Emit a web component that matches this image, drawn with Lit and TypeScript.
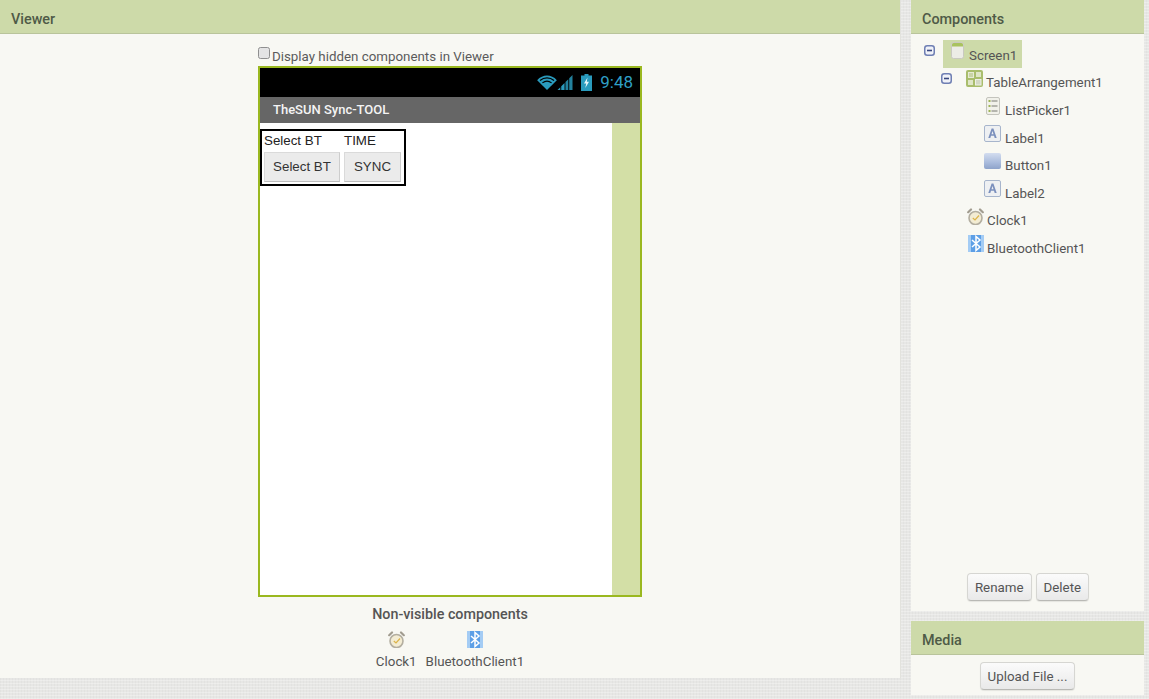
import { LitElement, html, css, svg } from "lit";
import { customElement } from "lit/decorators.js";

const screenIcon = svg`<svg width="13" height="17" viewBox="0 0 13 17"><rect x=".5" y=".5" width="12" height="16" rx="2" fill="#ecece6" stroke="#c9c9c0"/><path d="M1 4.500V2.500A1.500 1.500 0 0 1 2.500 1h8A1.500 1.500 0 0 1 12 2.500v2z" fill="#a9c25f"/></svg>`;
const tableIcon = svg`<svg width="17" height="17" viewBox="0 0 17 17"><rect width="17" height="17" rx="2" fill="#a9bd6c"/><rect x="2.500" y="2.500" width="5" height="5" fill="#c9d4a6" stroke="#e6ebd4"/><rect x="10" y="2" width="5" height="5" fill="#dfe6c6"/><rect x="2" y="10" width="5" height="5" fill="#dfe6c6"/><rect x="9.500" y="9.500" width="5.500" height="5.500" fill="#d3d8c4" stroke="#eef0e6"/></svg>`;
const listIcon = svg`<svg width="14" height="18" viewBox="0 0 14 18"><rect x=".5" y=".5" width="13" height="17" rx="1.500" fill="#f1f1ea" stroke="#c4c4bd"/><g fill="#9eb456"><rect x="2.500" y="3" width="2" height="2"/><rect x="2.500" y="8" width="2" height="2"/><rect x="2.500" y="13" width="2" height="2"/></g><g fill="#b5b5ae"><rect x="5.500" y="3" width="6" height="2"/><rect x="5.500" y="8" width="6" height="2"/><rect x="5.500" y="13" width="6" height="2"/></g></svg>`;
const labelIcon = svg`<svg width="17" height="17" viewBox="0 0 17 17"><rect x=".5" y=".5" width="16" height="16" rx="1.500" fill="#eef0f2" stroke="#a7b5cc"/><path d="M4.300 13 7.600 3.500h1.800l3.300 9.500h-2l-.7-2.200H7l-.7 2.200zM7.500 9.200h2L8.500 5.900z" fill="#7b90bd"/></svg>`;
const buttonIcon = svg`<svg width="17" height="16" viewBox="0 0 17 16"><defs><linearGradient id="bt" x1="0" y1="0" x2="0" y2="1"><stop offset="0" stop-color="#d3ddef"/><stop offset=".6" stop-color="#a9bbdc"/><stop offset="1" stop-color="#8ea3ca"/></linearGradient></defs><rect width="17" height="16" rx="2" fill="url(#bt)"/></svg>`;
const clockIcon = svg`<svg width="17" height="17" viewBox="0 0 17 17"><circle cx="8.500" cy="10" r="6.500" fill="#f3ecd3" stroke="#b3aea0" stroke-width="1.600"/><path d="M1.200 4.200 4 1.500M15.800 4.200 13 1.500" stroke="#a19c8f" stroke-width="2.200" stroke-linecap="round"/><path d="M5.800 10 8 12l4-4.500" fill="none" stroke="#dcb449" stroke-width="1.200"/></svg>`;
const btIcon = svg`<svg width="16" height="17" viewBox="0 0 16 17"><rect width="16" height="17" rx="1.500" fill="#5d9fe6"/><rect width="3" height="17" fill="#a4ccf4"/><rect x="13" width="3" height="17" fill="#a4ccf4"/><path d="M4 5l8 7L8 15.500V1.500L12 5l-8 7" fill="none" stroke="#fff" stroke-width="1.500"/></svg>`;

const checkboxIcon = svg`<svg width="12" height="12" viewBox="0 0 12 12"><rect x=".5" y=".5" width="11" height="11" rx="2" fill="#e4e4e4" stroke="#8f8f8f"/></svg>`;
const wifi = svg`<svg width="20" height="15" viewBox="0 0 21 16"><path d="M10.500 16 0 5.500C6-1 15-1 21 5.500z" fill="#2a9bbd"/><path d="M3 5.800c4.500-3.600 10.500-3.600 15 0M5.600 8.400c3-2.300 6.800-2.300 9.800 0" fill="none" stroke="#000" stroke-width="1.300"/></svg>`;
const signal = svg`<svg width="16" height="15" viewBox="0 0 16 16"><path d="M0 16 3 13V16zM4 16V12L7.500 8.500V16z" fill="#2a9bbd"/><path d="M8.500 16V7.500L11.500 4.500V16zM12.500 16V3.500L16 0V16z" fill="#23819d"/></svg>`;
const battery = svg`<svg width="11" height="17" viewBox="0 0 11 17"><path d="M3.500 0h4v1.500h3.500V17H0V1.500h3.500z" fill="#2a9bbd"/><path d="M6.500 3.500 3 9.500h2.200L4.300 14 8 7.800H5.800z" fill="#e8f6fa"/></svg>`;
const toggle = svg`<svg class="toggle" width="11" height="11" viewBox="0 0 11 11"><rect x=".75" y=".75" width="9.500" height="9.500" rx="2.500" fill="#f0f2f8" stroke="#6f7fb3" stroke-width="1.500"/><rect x="3" y="4.700" width="5" height="1.600" fill="#39477f"/></svg>`;

@customElement("app-root")
export class AppRoot extends LitElement {
  static styles = css`
    :host {
      display: block;
      width: 1149px;
      height: 699px;
      overflow: hidden;
      font-family: Roboto, "Liberation Sans", sans-serif;
      color: #555;
      background-color: #e7e7e5;
      background-image:
        repeating-linear-gradient(0deg, rgba(255,255,255,.28) 0 1px, transparent 1px 3px),
        repeating-linear-gradient(90deg, rgba(0,0,0,.025) 0 1px, transparent 1px 3px);
    }
    .page { display: grid; grid-template-columns: 901px 233px; column-gap: 10px; align-items: start; }
    .right { display: flex; flex-direction: column; gap: 10px; }
    .panel { background: #f8f8f3; box-sizing: border-box; display: flex; flex-direction: column; }
    .head {
      height: 34px; box-sizing: border-box; flex: none;
      background: #cddaa9; border-bottom: 1px solid #b9c49b;
      padding: 5px 11px 0; display: flex; align-items: center;
      font-size: 14.400px; font-weight: 500; color: #4f5a47;
    }
    .viewer { height: 678px; border-right: 1px solid #e2e2dd; }
    .viewbody { flex: 1; display: flex; flex-direction: column; align-items: center; }
    .hidden {
      width: 384px; height: 32px; box-sizing: border-box; padding-top: 13px;
      display: flex; align-items: flex-start; font-size: 13.330px; color: #5b5b5b; gap: 2px;
    }
    .hidden svg { display: block; }
    .hidden span { margin-top: 2px; line-height: 15px; }
    .phone {
      width: 384px; height: 531px; box-sizing: border-box;
      border: 2px solid #9ab81f; display: flex; flex-direction: column; background: #fff;
    }
    .status {
      height: 29px; flex: none; background: #000; display: flex; align-items: center;
      justify-content: flex-end; padding-right: 7px; color: #2f9fc5; font-size: 17px; font-family: Roboto, sans-serif;
    }
    .status svg { display: block; }
    .time { margin-top: -2px; }
    .signal { margin-right: 8px; }
    .battery { margin-right: 8px; }
    .title {
      height: 26px; flex: none; box-sizing: border-box; padding: 0 0 2px 13px;
      background: #666; color: #f4f4f4; font-size: 13px; font-weight: 500;
      display: flex; align-items: center; font-family: Roboto, sans-serif;
    }
    .content { flex: 1; display: flex; }
    .screen { width: 352px; padding-top: 6px; box-sizing: border-box; }
    .side { flex: 1; background: #d3dfa6; }
    .table {
      display: inline-grid; grid-template-columns: 76px 57px; column-gap: 4px;
      border: 2px solid #000; padding: 0 3px 2px 2px; vertical-align: top;
      font-family: "Liberation Sans", Arial, sans-serif; font-size: 13.330px; color: #222;
    }
    .cell { height: 21px; box-sizing: border-box; display: flex; align-items: center; padding-bottom: 3px; }
    .mock {
      height: 30px; background: #ebebeb; box-sizing: border-box; padding-bottom: 1px;
      border: 1px solid #dadada; border-bottom-color: #bdbdbd; border-right-color: #cdcdcd;
      display: flex; align-items: center; justify-content: center; color: #333;
    }
    .nv-title { margin-top: 8px; font-size: 14.300px; font-weight: 500; color: #555; line-height: 18px; }
    .nv { display: flex; gap: 9px; margin-top: 8px; font-size: 13.330px; color: #555; }
    .nv div { display: flex; flex-direction: column; align-items: center; gap: 6px; line-height: 15px; }
    .nv svg { display: block; }
    .components { height: 611px; }
    .tree { flex: 1; padding: 6px 0 0 13px; font-size: 13.330px; color: #555; }
    .row { height: 27.600px; display: flex; align-items: center; }
    .row svg { display: block; flex: none; margin-bottom: 6px; }
    .sel {
      display: flex; align-items: center; height: 28px; background: #cddaa9; padding: 0 5px 0 8px; margin-left: 8px; gap: 5px;
    }
    .sel span, .node span { margin-top: 3px; }
    .node { display: flex; align-items: center; gap: 3px; }
    .ic { width: 17px; display: flex; justify-content: center; flex: none; }
    .lv1 { padding-left: 17px; }
    .n1 { margin-left: 14px; }
    .n2 { padding-left: 43px; }
    .n3 { padding-left: 60px; }
    .n3 .node { gap: 4px; }
    .foot { display: flex; justify-content: center; gap: 4px; padding-bottom: 10px; padding-left: 1px; }
    button {
      font: 13.330px Roboto, sans-serif; color: #555; height: 28px; padding: 0 7px;
      background: linear-gradient(#fbfbfb, #e9e9e9);
      border: 1px solid #d6d6d2; border-bottom-color: #b9b9b5; border-radius: 4px;
      box-shadow: 0 1px 1px rgba(0,0,0,.08);
    }
    .media { height: 74px; }
    .mediafoot { display: flex; justify-content: center; padding-top: 7px; }
  `;

  private node(icon: unknown, text: string, cls: string) {
    return html`<div class="row ${cls}"><div class="node"><div class="ic">${icon}</div><span>${text}</span></div></div>`;
  }

  render() {
    return html`<div class="page">
      <section class="panel viewer">
        <div class="head">Viewer</div>
        <div class="viewbody">
          <div class="hidden">${checkboxIcon}<span>Display hidden components in Viewer</span></div>
          <div class="phone">
            <div class="status">${wifi}<span class="signal">${signal}</span><span class="battery">${battery}</span><span class="time">9:48</span></div>
            <div class="title">TheSUN Sync-TOOL</div>
            <div class="content">
              <div class="screen">
                <div class="table">
                  <div class="cell">Select BT</div><div class="cell">TIME</div>
                  <div class="mock">Select BT</div><div class="mock">SYNC</div>
                </div>
              </div>
              <div class="side"></div>
            </div>
          </div>
          <div class="nv-title">Non-visible components</div>
          <div class="nv">
            <div>${clockIcon}<span>Clock1</span></div>
            <div>${btIcon}<span>BluetoothClient1</span></div>
          </div>
        </div>
      </section>
      <div class="right">
        <section class="panel components">
          <div class="head">Components</div>
          <div class="tree">
            <div class="row">
              ${toggle}
              <div class="sel">${screenIcon}<span>Screen1</span></div>
            </div>
            <div class="row lv1">
              ${toggle}
              <div class="node n1">${tableIcon}<span>TableArrangement1</span></div>
            </div>
            ${this.node(listIcon, "ListPicker1", "n3")}
            ${this.node(labelIcon, "Label1", "n3")}
            ${this.node(buttonIcon, "Button1", "n3")}
            ${this.node(labelIcon, "Label2", "n3")}
            ${this.node(clockIcon, "Clock1", "n2")}
            ${this.node(btIcon, "BluetoothClient1", "n2")}
          </div>
          <div class="foot"><button>Rename</button><button>Delete</button></div>
        </section>
        <section class="panel media">
          <div class="head">Media</div>
          <div class="mediafoot"><button>Upload File ...</button></div>
        </section>
      </div>
    </div>`;
  }
}
